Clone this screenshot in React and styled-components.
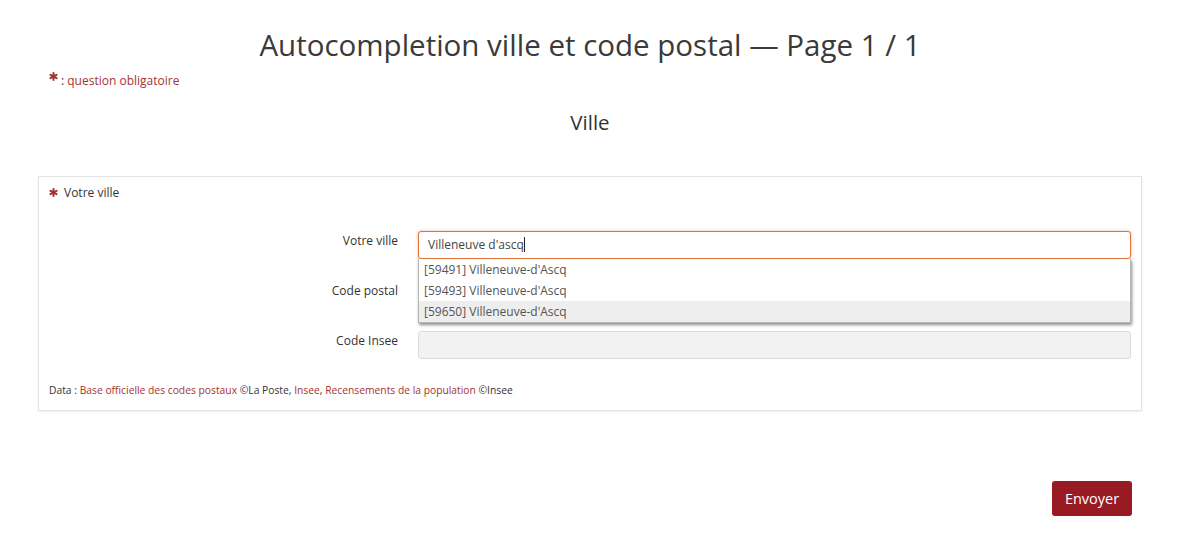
import React from 'react';
import styled, { createGlobalStyle } from 'styled-components';

const GlobalStyle = createGlobalStyle`
  html, body {
    margin: 0;
    padding: 0;
    background: #fff;
  }
  body {
    font-family: "Open Sans", "Noto Sans", sans-serif;
    color: #333;
  }
`;

const RED = '#a8312f';

const Page = styled.div`
  padding: 0 58px 0 38px;
`;

const Title = styled.h1`
  margin: 0;
  padding-top: 27px;
  font-size: 29.5px;
  line-height: 36px;
  font-weight: 400;
  text-align: center;
  color: #3a3a3a;
`;

const RequiredNote = styled.p`
  margin: 9px 0 0 11px;
  font-size: 12px;
  line-height: 18px;
  color: #333;
  .txt {
    color: ${RED};
  }
`;

const Star = styled.svg`
  width: ${(p) => p.$size}px;
  height: ${(p) => p.$size}px;
  vertical-align: ${(p) => (p.$raised ? '4px' : '0')};
  margin-right: ${(p) => p.$gap}px;
  fill: ${RED};
`;

const SectionTitle = styled.h2`
  margin: 19px 0 0;
  font-size: 20.5px;
  line-height: 26px;
  font-weight: 400;
  text-align: center;
  color: #333;
`;

const Panel = styled.section`
  margin-top: 41px;
  border: 1px solid #e4e4e4;
  box-shadow: 0 1px 2px rgba(0, 0, 0, 0.08);
  padding: 7px 10px 13px;
`;

const PanelHeading = styled.div`
  font-size: 12px;
  line-height: 18px;
  color: #333;
`;

const Form = styled.div`
  margin-top: 29px;
  display: grid;
  grid-template-columns: 349px 1fr;
  column-gap: 20px;
  row-gap: 22px;
`;

const Label = styled.label`
  text-align: right;
  font-size: 12px;
  line-height: 18px;
  padding-top: 1px;
  color: #333;
`;

const Field = styled.div`
  position: relative;
`;

const Input = styled.div`
  box-sizing: border-box;
  height: 28px;
  padding: 0 9px;
  font-size: 12px;
  line-height: 26px;
  color: #444;
  border-radius: 3px;
  border: 1px solid ${(p) => (p.$focus ? '#e0763f' : '#dcdcdc')};
  background: ${(p) => (p.$disabled ? '#f2f2f2' : '#fff')};
  box-shadow: ${(p) => (p.$focus ? '0 0 3px rgba(230, 110, 50, 0.55)' : 'none')};
`;

const Caret = styled.span`
  display: inline-block;
  width: 1px;
  height: 15px;
  background: #222;
  vertical-align: -3px;
`;

const Menu = styled.ul`
  position: absolute;
  top: 28px;
  left: 0;
  right: 0;
  margin: 0;
  padding: 0;
  list-style: none;
  background: #fff;
  border: 1px solid #b5b5b5;
  border-top: none;
  box-shadow: 1px 2px 3px rgba(0, 0, 0, 0.45);
  z-index: 2;
`;

const MenuItem = styled.li`
  height: 21px;
  line-height: 21px;
  padding: 0 5px;
  font-size: 12px;
  color: #555;
  background: ${(p) => (p.$active ? '#eeeeee' : '#fff')};
`;

const DataNote = styled.p`
  margin: 24px 0 0;
  font-size: 10.3px;
  line-height: 14px;
  color: #333;
  a {
    color: ${RED};
    text-decoration: none;
  }
`;

const Actions = styled.div`
  display: flex;
  justify-content: flex-end;
  padding-right: 10px;
  margin-top: 70px;
`;

const SubmitButton = styled.button`
  width: 80px;
  height: 35px;
  border: none;
  border-radius: 3px;
  background: #981b24;
  color: #fff;
  font-family: "Open Sans", "Noto Sans", sans-serif;
  font-size: 14.5px;
  cursor: pointer;
`;

// asterisk with thick rounded spokes, like the font icon of the reference
const Asterisk = ({ size = 8, raised = false, gap = 4 }) => (
  <Star viewBox="0 0 16 16" $size={size} $raised={raised} $gap={gap}>
    <g stroke={RED} strokeWidth="3.6" strokeLinecap="round">
      <line x1="8" y1="1.8" x2="8" y2="14.2" />
      <line x1="2.6" y1="4.9" x2="13.4" y2="11.1" />
      <line x1="2.6" y1="11.1" x2="13.4" y2="4.9" />
    </g>
  </Star>
);

const suggestions = [
  '[59491] Villeneuve-d\'Ascq',
  '[59493] Villeneuve-d\'Ascq',
  '[59650] Villeneuve-d\'Ascq',
];

const App = () => {
  return (
    <>
      <GlobalStyle />
      <Page>
        <Title>Autocompletion ville et code postal — Page 1 / 1</Title>
        <RequiredNote>
          <Asterisk size={9} raised gap={3} />: <span className="txt">question obligatoire</span>
        </RequiredNote>
        <SectionTitle>Ville</SectionTitle>

        <Panel>
          <PanelHeading>
            <Asterisk size={9} gap={6} />Votre ville
          </PanelHeading>

          <Form>
            <Label>Votre ville</Label>
            <Field>
              <Input $focus>
                Villeneuve d'ascq<Caret />
              </Input>
              <Menu>
                {suggestions.map((s, i) => (
                  <MenuItem key={s} $active={i === 2}>{s}</MenuItem>
                ))}
              </Menu>
            </Field>

            <Label>Code postal</Label>
            <Field>
              <Input />
            </Field>

            <Label>Code Insee</Label>
            <Field>
              <Input $disabled />
            </Field>
          </Form>

          <DataNote>
            Data : <a href="#">Base officielle des codes postaux</a> ©La Poste,{' '}
            <a href="#">Insee</a>, <a href="#">Recensements de la population</a> ©Insee
          </DataNote>
        </Panel>

        <Actions>
          <SubmitButton>Envoyer</SubmitButton>
        </Actions>
      </Page>
    </>
  );
};

export default App;
